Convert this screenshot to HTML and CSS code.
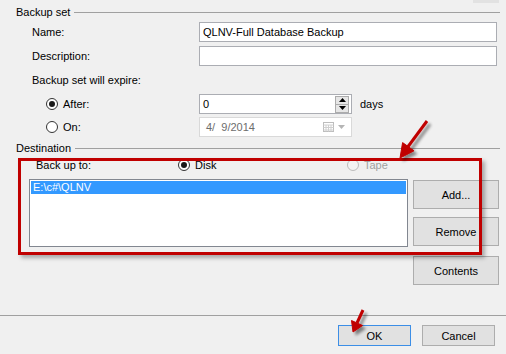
FILE: index.html
```html
<!DOCTYPE html>
<html lang="en">
<head>
    <meta charset="UTF-8">
    <title>Back Up Database - General</title>
    <link rel="stylesheet" href="styles.css">
</head>
<body>
    <div class="dialog">
        <div class="tabstrip"><span class="tab"></span></div>

        <!-- Backup set group -->
        <div class="group-head"><span>Backup set</span><span class="rule"></span></div>
        <div class="field name-row">
            <span class="label">Name:</span>
            <div class="input">QLNV-Full Database Backup</div>
        </div>
        <div class="field gap4">
            <span class="label">Description:</span>
            <div class="input"></div>
        </div>
        <div class="field gap4">
            <span class="label">Backup set will expire:</span>
        </div>
        <div class="field sub gap4">
            <span class="label"><span class="radio checked"></span>After:</span>
            <div class="input short">
                <span class="value">0</span>
                <span class="spin">
                    <span class="spin-btn"><svg width="7" height="4" viewBox="0 0 7 4"><path d="M0 4 L3.5 0 L7 4 Z" fill="#000"/></svg></span>
                    <span class="spin-btn"><svg width="7" height="4" viewBox="0 0 7 4"><path d="M0 0 L3.5 4 L7 0 Z" fill="#000"/></svg></span>
                </span>
            </div>
            <span class="unit">days</span>
        </div>
        <div class="field sub gap3">
            <span class="label"><span class="radio"></span>On:</span>
            <div class="input short disabled">
                <span class="value date">4/  9/2014</span>
                <svg class="cal" width="11" height="10" viewBox="0 0 11 10">
                    <rect x="0.5" y="0.5" width="10" height="9" fill="#fff" stroke="#bdbdbd"/>
                    <path d="M0.5 3 H10.5 M0.5 5.5 H10.5 M0.5 8 H10.5 M3 3 V9.5 M5.5 3 V9.5 M8 3 V9.5" stroke="#d0d0d0" stroke-width="1"/>
                </svg>
                <svg class="drop" width="7" height="4" viewBox="0 0 7 4"><path d="M0 0 L3.5 4 L7 0 Z" fill="#b5b5b5"/></svg>
            </div>
        </div>

        <!-- Destination group -->
        <div class="group-head dest-head"><span>Destination</span><span class="rule"></span></div>
        <div class="backup-to">
            <span class="to-label">Back up to:</span>
            <span class="choice disk"><span class="radio checked"></span>Disk</span>
            <span class="choice off"><span class="radio disabled"></span>Tape</span>
        </div>
        <div class="dest-body">
            <div class="listbox">
                <div class="item selected">E:\c#\QLNV</div>
            </div>
            <div class="side-buttons">
                <button class="btn">Add...</button>
                <button class="btn remove">Remove</button>
                <button class="btn contents">Contents</button>
            </div>
        </div>

        <div class="separator"></div>
        <div class="footer">
            <button class="btn small default">OK</button>
            <button class="btn small">Cancel</button>
        </div>

        <!-- annotation: highlight box and arrows -->
        <div class="highlight"></div>
        <svg class="arrows" width="506" height="354" viewBox="0 0 506 354">
            <defs>
                <filter id="shadow" x="-50%" y="-50%" width="200%" height="200%">
                    <feGaussianBlur in="SourceAlpha" stdDeviation="1.6"/>
                    <feOffset dx="3" dy="3" result="blur"/>
                    <feComponentTransfer><feFuncA type="linear" slope="0.45"/></feComponentTransfer>
                    <feMerge><feMergeNode/><feMergeNode in="SourceGraphic"/></feMerge>
                </filter>
            </defs>
            <g filter="url(#shadow)" fill="#c00000" stroke="#c00000">
                <line x1="427" y1="121" x2="407" y2="148" stroke-width="3"/>
                <polygon points="400,158 402.6,142.6 414,150.8" stroke-width="1"/>
                <line x1="363" y1="310" x2="357" y2="323" stroke-width="3"/>
                <polygon points="353,332 351.5,320.5 362.5,325.5" stroke-width="1"/>
            </g>
        </svg>
    </div>
</body>
</html>
```

FILE: styles.css
```css
body {
    margin: 0;
    background-color: #f0f0f0;
    font-family: "Liberation Sans", Arial, sans-serif;
    font-size: 11px;
    color: #000;
}
.dialog {
    position: relative;
    width: 506px;
    height: 354px;
    overflow: hidden;
}
.tabstrip {
    height: 3px;
    display: flex;
    justify-content: flex-end;
    padding-right: 7px;
}
.tab {
    width: 26px;
    background-color: #e2e2e2;
}
.group-head {
    height: 18px;
    display: flex;
    align-items: center;
    padding: 0 6px 0 16px;
}
.rule {
    flex: 1;
    height: 1px;
    background-color: #a0a0a0;
    margin-left: 4px;
}
.field {
    display: flex;
    align-items: center;
    height: 20px;
    padding-left: 32px;
}
.field.sub {
    padding-left: 46px;
}
.name-row {
    margin-top: 1px;
}
.gap4 {
    margin-top: 4px;
}
.gap3 {
    margin-top: 3px;
}
.label {
    width: 167px;
    display: flex;
    align-items: center;
}
.sub .label {
    width: 153px;
}
.input {
    width: 298px;
    height: 20px;
    box-sizing: border-box;
    border: 1px solid #abadb3;
    background-color: #fff;
    padding-left: 3px;
    display: flex;
    align-items: center;
}
.input.short {
    width: 153px;
}
.input.disabled {
    border-color: #d9d9d9;
    padding-left: 6px;
}
.value {
    flex: 1;
}
.date {
    color: #6d6d6d;
    white-space: pre;
}
.spin {
    display: flex;
    flex-direction: column;
    width: 14px;
    margin-right: 2px;
}
.spin-btn {
    height: 7px;
    display: flex;
    align-items: center;
    justify-content: center;
    background-color: #e6e6e6;
    border: 1px solid #acacac;
}
.spin-btn + .spin-btn {
    border-top: none;
}
.cal {
    margin-right: 4px;
}
.drop {
    margin-right: 6px;
}
.unit {
    margin-left: 8px;
}
.radio {
    width: 12px;
    height: 12px;
    box-sizing: border-box;
    border: 1px solid #333;
    border-radius: 50%;
    background-color: #fff;
    margin-right: 5px;
    display: flex;
    align-items: center;
    justify-content: center;
}
.radio.checked::after {
    content: "";
    width: 6px;
    height: 6px;
    border-radius: 50%;
    background-color: #1a1a1a;
}
.radio.disabled {
    border-color: #bcbcbc;
    background-color: #f4f4f4;
}
.dest-head {
    margin-top: 2px;
}
.backup-to {
    height: 16px;
    display: flex;
    align-items: center;
    padding-left: 36px;
}
.to-label {
    width: 142px;
}
.choice {
    display: flex;
    align-items: center;
}
.choice.disk {
    width: 169px;
}
.choice.off {
    color: #a0a0a0;
}
.dest-body {
    display: flex;
    align-items: flex-start;
    margin-top: 6px;
    padding-left: 29px;
}
.listbox {
    width: 379px;
    height: 68px;
    box-sizing: border-box;
    border: 1px solid #828790;
    background-color: #fff;
    padding: 1px;
}
.item {
    height: 13px;
    line-height: 13px;
    padding-left: 2px;
}
.item.selected {
    background-color: #3399ff;
    color: #fff;
}
.side-buttons {
    display: flex;
    flex-direction: column;
    margin-left: 5px;
    margin-top: 1px;
}
.btn {
    width: 86px;
    height: 29px;
    border: 1px solid #adadad;
    background-color: #e1e1e1;
    font-family: "Liberation Sans", Arial, sans-serif;
    font-size: 11px;
    color: #000;
    padding: 0;
}
.btn.remove {
    margin-top: 8px;
}
.btn.contents {
    margin-top: 10px;
}
.separator {
    height: 1px;
    background-color: #a0a0a0;
    margin-top: 30px;
}
.footer {
    display: flex;
    justify-content: flex-end;
    gap: 11px;
    margin-top: 9px;
    padding-right: 11px;
}
.btn.small {
    width: 73px;
    height: 21px;
}
.btn.default {
    border-color: #3c8ee6;
}
.highlight {
    position: absolute;
    left: 18px;
    top: 158px;
    width: 464px;
    height: 97px;
    box-sizing: border-box;
    border: 3px solid #c00000;
    box-shadow: 3px 3px 4px rgba(0, 0, 0, 0.3);
}
.arrows {
    position: absolute;
    left: 0;
    top: 0;
    pointer-events: none;
}
```
